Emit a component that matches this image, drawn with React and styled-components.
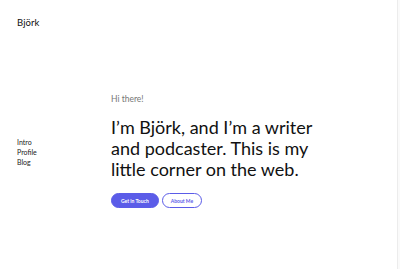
import React from "react";
import styled, { createGlobalStyle } from "styled-components";

const Global = createGlobalStyle`
  html, body { margin: 0; padding: 0; background: #fff; }
  body {
    font-family: "Lato", "Liberation Sans", sans-serif;
    color: #111;
    -webkit-font-smoothing: antialiased;
  }
`;

const Page = styled.div`
  display: flex;
  width: 400px;
  height: 269px;
  overflow: hidden;
`;

const Sidebar = styled.aside`
  width: 94px;
  padding: 17px 0 0 17px;
  display: flex;
  flex-direction: column;
`;

const Logo = styled.div`
  font-size: 9.5px;
  font-weight: 400;
  letter-spacing: 0.1px;
  color: #111;
`;

const Nav = styled.nav`
  margin-top: 109px;
  display: flex;
  flex-direction: column;
`;

const NavLink = styled.a`
  font-size: 7px;
  line-height: 10px;
  text-decoration: none;
  &:link,
  &:visited {
    color: #222;
  }
`;

const Main = styled.main`
  flex: 1;
  padding-top: 94px;
`;

const Greeting = styled.p`
  margin: 0;
  font-size: 8.5px;
  color: #777;
`;

const Headline = styled.h1`
  margin: 13px 0 0;
  font-size: 18px;
  line-height: 21px;
  font-weight: 400;
  color: #111;
`;

const Actions = styled.div`
  display: flex;
  gap: 3px;
  margin-top: 13px;
`;

const Button = styled.button`
  height: 15px;
  padding: 0 ${(p) => (p.$primary ? "9px" : "8px")};
  border-radius: 8px;
  font-family: inherit;
  font-size: 5px;
  font-weight: 700;
  cursor: pointer;
  border: 1px solid #5b5ce8;
  background: ${(p) => (p.$primary ? "#5b5ce8" : "#fff")};
  color: ${(p) => (p.$primary ? "#fff" : "#5b5ce8")};
`;

const Scroll = styled.div`
  width: 2px;
  border-left: 1px solid #ececec;
  background: #fafafa;
`;

export default function App() {
  return (
    <>
      <Global />
      <Page>
        <Sidebar>
          <Logo>Björk</Logo>
          <Nav>
            <NavLink href="#">Intro</NavLink>
            <NavLink href="#">Profile</NavLink>
            <NavLink href="#">Blog</NavLink>
          </Nav>
        </Sidebar>
        <Main>
          <Greeting>Hi there!</Greeting>
          <Headline>
            I’m Björk, and I’m a writer
            <br />
            and podcaster. This is my
            <br />
            little corner on the web.
          </Headline>
          <Actions>
            <Button $primary>Get in Touch</Button>
            <Button>About Me</Button>
          </Actions>
        </Main>
        <Scroll />
      </Page>
    </>
  );
}
